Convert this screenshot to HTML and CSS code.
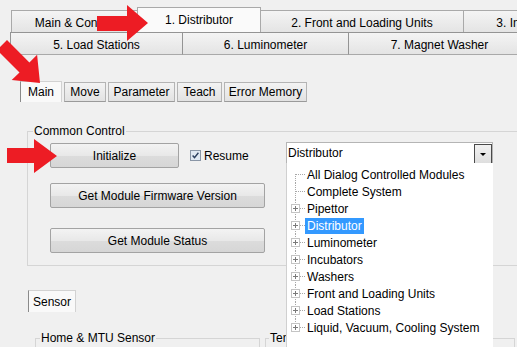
FILE: index.html
```html
<html>
<head>
    <title>Distributor | Module Control</title>
    <link rel="stylesheet" href="styles.css">
</head>
<body>
<div class="screen">

  <div class="module-tabs">
    <div class="tab-row row-back">
      <div class="tab" style="width:127px">Main &amp; Control</div>
      <div class="tab tab-current" style="width:124px">1. Distributor</div>
      <div class="tab" style="width:204px">2. Front and Loading Units</div>
      <div class="tab" style="width:136px">3. Incubators</div>
    </div>
    <div class="tab-row row-front">
      <div class="tab" style="width:173px">5. Load Stations</div>
      <div class="tab" style="width:167px">6. Luminometer</div>
      <div class="tab" style="width:183px">7. Magnet Washer</div>
    </div>
  </div>

  <div class="page-tabs">
    <div class="ptab ptab-current" style="width:42px">Main</div>
    <div class="ptab" style="width:42px">Move</div>
    <div class="ptab" style="width:67px">Parameter</div>
    <div class="ptab" style="width:45px">Teach</div>
    <div class="ptab" style="width:83px">Error Memory</div>
  </div>

  <fieldset class="group group-common">
    <legend>Common Control</legend>
    <div class="common-body">
      <div class="actions">
        <div class="action-line">
          <button class="btn btn-init">Initialize</button>
          <label class="check">
            <span class="check-box">
              <svg width="11" height="11" viewBox="0 0 11 11">
                <rect x="0.5" y="0.5" width="10" height="10" fill="#dfe8f2" stroke="#8a96a6"/>
                <path d="M2.6 5.6 L4.5 7.6 L8.4 2.8" fill="none" stroke="#2b3f5e" stroke-width="1.4"/>
              </svg>
            </span>
            Resume
          </label>
        </div>
        <button class="btn btn-wide btn-firmware">Get Module Firmware Version</button>
        <button class="btn btn-wide btn-status">Get Module Status</button>
      </div>

      <div class="combo">
        <div class="combo-field">Distributor</div>
        <span class="combo-btn"><span class="caret"></span></span>
        <ul class="tree">
          <li><span class="twig"></span><span class="label">All Dialog Controlled Modules</span></li>
          <li><span class="twig"></span><span class="label">Complete System</span></li>
          <li><span class="twig"><span class="plus"></span></span><span class="label">Pipettor</span></li>
          <li><span class="twig"><span class="plus"></span></span><span class="label picked">Distributor</span></li>
          <li><span class="twig"><span class="plus"></span></span><span class="label">Luminometer</span></li>
          <li><span class="twig"><span class="plus"></span></span><span class="label">Incubators</span></li>
          <li><span class="twig"><span class="plus"></span></span><span class="label">Washers</span></li>
          <li><span class="twig"><span class="plus"></span></span><span class="label">Front and Loading Units</span></li>
          <li><span class="twig"><span class="plus"></span></span><span class="label">Load Stations</span></li>
          <li><span class="twig"><span class="plus"></span></span><span class="label">Liquid, Vacuum, Cooling System</span></li>
        </ul>
      </div>
    </div>
  </fieldset>

  <div class="page-tabs sensor-tabs">
    <div class="ptab ptab-current" style="width:48px">Sensor</div>
  </div>

  <div class="sensor-groups">
    <fieldset class="group group-home"><legend>Home &amp; MTU Sensor</legend></fieldset>
    <fieldset class="group group-temp"><legend>Temperature</legend></fieldset>
  </div>

  <!-- red hint arrows drawn over the dialog -->
  <svg class="marks" width="517" height="347" viewBox="0 0 517 347">
    <polygon points="97,16 127,16 127,5 148,23 127,41 127,31 97,31"/>
    <polygon points="-3,50 7,40 29.4,62.5 37.1,54.7 40,83 11.7,80.1 19.5,72.4"/>
    <polygon points="7,148 34,148 34,139 57,156 34,173 34,163 7,163"/>
  </svg>
</div>
</body>
</html>
```

FILE: styles.css
```css
body {
    margin: 0;
    background: #f0f0f0;
    font: 12px "Liberation Sans", Arial, sans-serif;
    color: #000;
}

.screen {
    position: relative;
    width: 517px;
    height: 347px;
    overflow: hidden;
}

/* module tabs, two rows */
.module-tabs {
    padding-top: 7px;
}

.tab-row {
    display: flex;
    align-items: flex-end;
}

.row-back {
    height: 25px;
    padding-left: 11px;
}

.row-front {
    height: 23px;
    padding-left: 10px;
}

.tab {
    flex: none;
    box-sizing: border-box;
    height: 22px;
    padding-top: 2px;
    margin-right: -1px;
    display: flex;
    align-items: center;
    justify-content: center;
    white-space: nowrap;
    border: 1px solid #a9a9a9;
    border-bottom: none;
    background: linear-gradient(#f4f4f4, #e4e4e4);
}

.row-front .tab {
    height: 23px;
    border-color: #949494;
    border-bottom: 1px solid #a9a9a9;
}

.tab-current {
    height: 25px;
    padding-top: 0;
    background: #fafafa;
}

/* page tabs */
.page-tabs {
    display: flex;
    align-items: flex-end;
    gap: 2px;
    height: 21px;
    margin: 26px 0 0 20px;
}

.ptab {
    flex: none;
    box-sizing: border-box;
    height: 20px;
    display: flex;
    align-items: center;
    justify-content: center;
    white-space: nowrap;
    border: 1px solid #b4b4b4;
    border-bottom-color: #9a9a9a;
    background: linear-gradient(#f3f3f3, #e2e2e2);
}

.ptab-current {
    height: 21px;
    border-color: #d2d2d2;
    border-left-color: #8a8a8a;
    border-bottom: none;
    background: #f9f9f9;
}

/* group boxes */
.group {
    box-sizing: border-box;
    min-width: 0;
    border: 1px solid #d5d5d5;
    padding: 0;
}

.group legend {
    line-height: 14px;
    padding: 0 1px;
    margin-left: 5px;
}

.group-common {
    width: 520px;
    margin: 22px 0 0 27px;
    padding-bottom: 12px;
}

.common-body {
    display: flex;
    align-items: flex-start;
    margin-top: 5px;
    padding-left: 22px;
}

.actions {
    width: 215px;
    display: flex;
    flex-direction: column;
}

.action-line {
    display: flex;
    align-items: center;
    height: 25px;
}

.btn {
    box-sizing: border-box;
    height: 25px;
    padding: 0;
    font: inherit;
    color: #000;
    border: 1px solid #a3a3a3;
    border-radius: 2px;
    background: linear-gradient(#f3f3f3, #e8e8e8 50%, #dcdcdc 51%, #d6d6d6);
}

.btn-init {
    width: 129px;
}

.btn-wide {
    width: 215px;
}

.btn-firmware {
    margin-top: 15px;
}

.btn-status {
    margin-top: 20px;
}

.check {
    display: flex;
    align-items: center;
    gap: 3px;
    margin-left: 11px;
}

.check-box svg {
    display: block;
}

/* combo with open tree */
.combo {
    position: relative;
    box-sizing: border-box;
    width: 207px;
    height: 22px;
    margin: -1px 0 0 21px;
    border: 1px solid #b5b5b5;
    background: #fff;
}

.combo-field {
    line-height: 20px;
    padding-left: 1px;
}

.combo-btn {
    position: absolute;
    top: 1px;
    right: 0;
    box-sizing: border-box;
    width: 18px;
    height: 20px;
    border: 1px solid #4a4a4a;
    background: linear-gradient(#f2f2f2, #dedede);
    display: flex;
    align-items: center;
    justify-content: center;
}

.caret {
    width: 0;
    height: 0;
    border-left: 3px solid transparent;
    border-right: 3px solid transparent;
    border-top: 3px solid #000;
}

.tree {
    position: absolute;
    top: 100%;
    left: -1px;
    z-index: 2;
    box-sizing: border-box;
    width: 207px;
    height: 200px;
    margin: 0;
    padding: 3px 0 0;
    list-style: none;
    background: #fff;
    border-left: 1px solid #d0d0d0;
}

.tree li {
    display: flex;
    align-items: center;
    height: 17px;
    white-space: nowrap;
}

.twig {
    position: relative;
    flex: none;
    width: 18px;
    height: 17px;
}

.twig:before {
    content: "";
    position: absolute;
    left: 8px;
    top: 0;
    bottom: 0;
    border-left: 1px dotted #a8a8a8;
}

.tree li:first-child .twig:before {
    top: 8px;
}

.tree li:last-child .twig:before {
    bottom: 8px;
}

.twig:after {
    content: "";
    position: absolute;
    left: 9px;
    top: 8px;
    width: 9px;
    border-top: 1px dotted #a8a8a8;
}

.plus {
    position: absolute;
    left: 4px;
    top: 4px;
    z-index: 1;
    box-sizing: border-box;
    width: 9px;
    height: 9px;
    border: 1px solid #c4c4c4;
    background: linear-gradient(#7a7a7a, #7a7a7a) center / 5px 1px no-repeat,
                linear-gradient(#7a7a7a, #7a7a7a) center / 1px 5px no-repeat,
                #fff;
}

.label {
    padding: 0 2px;
    line-height: 16px;
}

.label.picked {
    background: #3399ff;
    color: #fff;
}

/* sensor page */
.sensor-tabs {
    height: 22px;
    margin: 24px 0 0 28px;
}

.sensor-tabs .ptab {
    height: 22px;
}

.sensor-groups {
    display: flex;
    margin-top: 19px;
}

.group-home {
    width: 234px;
    height: 60px;
    margin-left: 35px;
}

.group-home legend {
    margin-left: 4px;
}

.group-temp {
    width: 260px;
    height: 60px;
    margin-left: 3px;
}

.group-temp legend {
    margin-left: 3px;
}

.marks {
    position: absolute;
    left: 0;
    top: 0;
    z-index: 5;
    pointer-events: none;
    fill: #ed1c24;
}
```
